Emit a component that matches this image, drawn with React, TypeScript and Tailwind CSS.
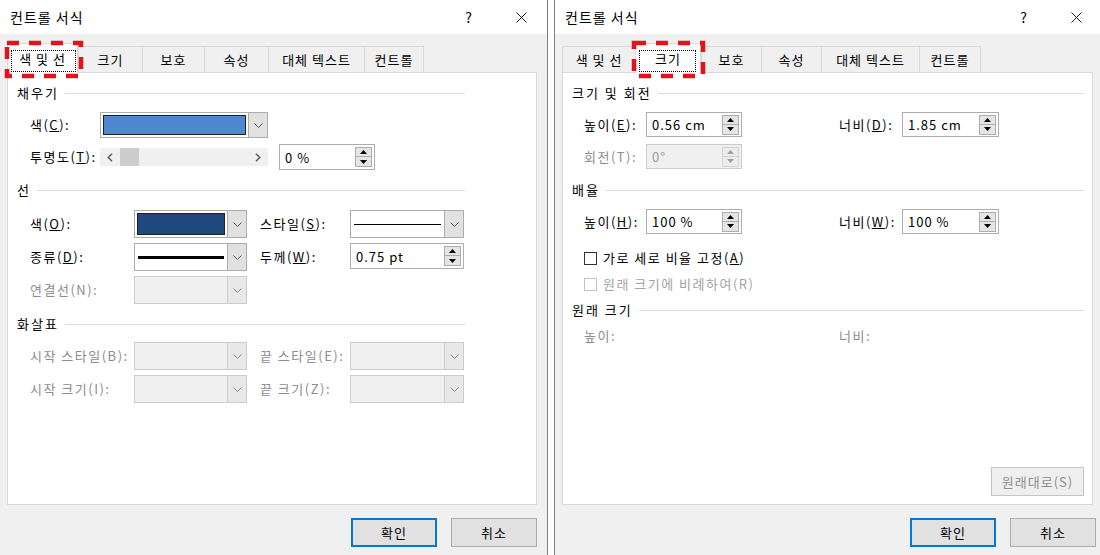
import React from "react";

type Kids = { children?: React.ReactNode; className?: string };

function Chevron({ dim }: { dim?: boolean }) {
  return (
    <svg width="9" height="5" viewBox="0 0 9 5">
      <path d="M0.5 0.5L4.5 4.5L8.5 0.5" fill="none" stroke={dim ? "#8a8a8a" : "#555555"} strokeWidth="1" />
    </svg>
  );
}

function Tri({ down, dim }: { down?: boolean; dim?: boolean }) {
  return (
    <svg width="7" height="4" viewBox="0 0 7 4">
      <path d={down ? "M0 0H7L3.5 4Z" : "M3.5 0L7 4H0Z"} fill={dim ? "#a0a0a0" : "#000000"} />
    </svg>
  );
}

function Dropdown({ children, className, disabled }: Kids & { disabled?: boolean }) {
  return (
    <div
      className={`flex items-stretch border ${
        disabled ? "border-[#cccccc] bg-[#f0f0f0]" : "border-[#adadad] bg-white"
      } ${className ?? ""}`}
    >
      <div className="flex-1 flex items-stretch p-[2px]">{children}</div>
      <div
        className={`w-[19px] flex items-center justify-center border-l ${
          disabled ? "border-[#cccccc] bg-[#e8e8e8]" : "border-[#adadad] bg-[#e1e1e1]"
        }`}
      >
        <Chevron dim={disabled} />
      </div>
    </div>
  );
}

function Swatch({ color }: { color: string }) {
  return <div className="flex-1 border border-[#202020]" style={{ backgroundColor: color }} />;
}

function LineSample({ thick }: { thick?: boolean }) {
  return (
    <div className="flex-1 flex items-center pl-[1px] pr-[1px]">
      <div className={`w-full bg-black ${thick ? "h-[3px]" : "h-px"}`} />
    </div>
  );
}

function Spinner({ value, className, disabled }: { value: string; className?: string; disabled?: boolean }) {
  return (
    <div
      className={`flex items-center border ${
        disabled ? "border-[#cccccc] bg-[#f0f0f0] text-[#9a9a9a]" : "border-[#adadad] bg-white"
      } ${className ?? ""}`}
    >
      <span className="flex-1 pl-[5px] leading-none tracking-[1px]">{value}</span>
      <div className="flex flex-col w-[17px] mr-[2px]">
        <div
          className={`h-[10px] flex items-center justify-center border ${
            disabled ? "border-[#d4d4d4] bg-[#ececec]" : "border-[#adadad] bg-[#e5e5e5]"
          }`}
        >
          <Tri dim={disabled} />
        </div>
        <div
          className={`h-[10px] flex items-center justify-center border border-t-0 ${
            disabled ? "border-[#d4d4d4] bg-[#ececec]" : "border-[#adadad] bg-[#e5e5e5]"
          }`}
        >
          <Tri down dim={disabled} />
        </div>
      </div>
    </div>
  );
}

function Scrollbar() {
  return (
    <div className="w-[168px] h-[18px] bg-[#f0f0f0] flex items-center">
      <div className="w-[20px] flex justify-center">
        <svg width="6" height="9" viewBox="0 0 6 9">
          <path d="M5 0.8L1.3 4.5L5 8.2" fill="none" stroke="#606060" strokeWidth="1.6" />
        </svg>
      </div>
      <div className="w-[19px] h-full bg-[#cdcdcd]" />
      <div className="flex-1" />
      <div className="w-[20px] flex justify-center">
        <svg width="6" height="9" viewBox="0 0 6 9">
          <path d="M1 0.8L4.7 4.5L1 8.2" fill="none" stroke="#606060" strokeWidth="1.6" />
        </svg>
      </div>
    </div>
  );
}

function GroupHeader({ title, className }: { title: string; className?: string }) {
  return (
    <div className={`flex items-center h-[18px] pl-[9px] gap-[6px] ${className ?? ""}`}>
      <span className="tracking-[2px]">{title}</span>
      <div className="flex-1 h-px bg-[#dcdcdc]" />
    </div>
  );
}

function Check({ disabled }: { disabled?: boolean }) {
  return (
    <div className={`w-[13px] h-[13px] border bg-white ${disabled ? "border-[#c4c4c4]" : "border-[#333333]"}`} />
  );
}

type TabDef = { label: string; w: string };

function Tabs({ tabs, selected, focusClass }: { tabs: TabDef[]; selected: number; focusClass: string }) {
  return (
    <div className="mt-[9px] h-[29px] flex items-end relative z-10">
      {tabs.map((t, i) =>
        i === selected ? (
          <div
            key={t.label}
            className={`${t.w} h-[30px] -mb-px relative bg-white border-l border-r border-t border-[#d9d9d9] flex items-center justify-center pt-[1px]`}
          >
            <span className="tracking-[1px]">{t.label}</span>
            <div className={`absolute border border-dotted border-black ${focusClass}`} />
          </div>
        ) : (
          <div
            key={t.label}
            className={`${t.w} h-[26px] bg-[#f0f0f0] border-t border-l border-[#d9d9d9] ${
              i === tabs.length - 1 ? "border-r" : ""
            } flex items-center justify-center`}
          >
            <span className="tracking-[1px]">{t.label}</span>
          </div>
        )
      )}
    </div>
  );
}

function RedMark({ className }: { className: string }) {
  return (
    <div className={`absolute pointer-events-none ${className}`}>
      <svg width="100%" height="100%" className="overflow-visible">
        <rect
          x="2"
          y="2"
          width="calc(100% - 4px)"
          height="calc(100% - 4px)"
          fill="none"
          stroke="#e3121b"
          strokeWidth="4.5"
          strokeDasharray="12 10"
        />
      </svg>
    </div>
  );
}

function TitleBar({ qClass, xClass }: { qClass: string; xClass: string }) {
  return (
    <div className="h-[34px] bg-white flex items-center pl-[10px] shrink-0">
      <span className="text-[14px] tracking-[1px]">컨트롤 서식</span>
      <span className={`ml-auto text-[14px] ${qClass}`}>?</span>
      <svg width="11" height="11" viewBox="0 0 11 11" className={xClass}>
        <path d="M0.5 0.5L10.5 10.5M10.5 0.5L0.5 10.5" stroke="#1a1a1a" strokeWidth="1" />
      </svg>
    </div>
  );
}

function Btn({ label, primary, disabled, className }: { label: string; primary?: boolean; disabled?: boolean; className?: string }) {
  return (
    <div
      className={`h-[29px] flex items-center justify-center tracking-[1px] ${
        primary
          ? "border-2 border-[#0078d7] bg-[#e1e1e1]"
          : disabled
          ? "border border-[#c4c4c4] bg-[#efefef] text-[#8d8d8d]"
          : "border border-[#adadad] bg-[#e1e1e1]"
      } ${className ?? ""}`}
    >
      {label}
    </div>
  );
}

const leftTabs: TabDef[] = [
  { label: "색 및 선", w: "w-[71px]" },
  { label: "크기", w: "w-[64px]" },
  { label: "보호", w: "w-[62px]" },
  { label: "속성", w: "w-[64px]" },
  { label: "대체 텍스트", w: "w-[96px]" },
  { label: "컨트롤", w: "w-[60px]" },
];

const rightTabs: TabDef[] = [
  { label: "색 및 선", w: "w-[73px]" },
  { label: "크기", w: "w-[66px]" },
  { label: "보호", w: "w-[60px]" },
  { label: "속성", w: "w-[60px]" },
  { label: "대체 텍스트", w: "w-[98px]" },
  { label: "컨트롤", w: "w-[62px]" },
];

function LinePanel() {
  return (
    <div className="h-[433px] border border-[#d9d9d9] bg-white flex flex-col tracking-[1.5px]">
      <GroupHeader title="채우기" className="mt-[11px] mr-[71px]" />
      <div className="mt-[10px] flex items-center h-[26px] pl-[22px]">
        <span className="w-[70px]">
          색(<u>C</u>):
        </span>
        <Dropdown className="w-[168px] h-[26px]">
          <Swatch color="#4f87d0" />
        </Dropdown>
      </div>
      <div className="mt-[6px] flex items-center h-[26px] pl-[22px]">
        <span className="w-[70px]">
          투명도(<u>T</u>):
        </span>
        <Scrollbar />
        <Spinner value="0 %" className="ml-[11px] w-[96px] h-[26px]" />
      </div>

      <GroupHeader title="선" className="mt-[11px] mr-[71px]" />
      <div className="mt-[11px] flex items-center h-[28px] pl-[22px]">
        <span className="w-[104px]">
          색(<u>O</u>):
        </span>
        <Dropdown className="w-[113px] h-[28px]">
          <Swatch color="#1f497d" />
        </Dropdown>
        <span className="ml-[13px] w-[90px]">
          스타일(<u>S</u>):
        </span>
        <Dropdown className="w-[114px] h-[28px]">
          <LineSample />
        </Dropdown>
      </div>
      <div className="mt-[5px] flex items-center h-[28px] pl-[22px]">
        <span className="w-[104px]">
          종류(<u>D</u>):
        </span>
        <Dropdown className="w-[113px] h-[28px]">
          <LineSample thick />
        </Dropdown>
        <span className="ml-[13px] w-[90px]">
          두께(<u>W</u>):
        </span>
        <Spinner value="0.75 pt" className="w-[114px] h-[26px] self-start" />
      </div>
      <div className="mt-[5px] flex items-center h-[28px] pl-[22px] text-[#8d8d8d]">
        <span className="w-[104px]">연결선(N):</span>
        <Dropdown className="w-[113px] h-[28px]" disabled />
      </div>

      <GroupHeader title="화살표" className="mt-[11px] mr-[71px]" />
      <div className="mt-[9px] flex items-center h-[28px] pl-[22px] text-[#8d8d8d]">
        <span className="w-[104px]">시작 스타일(B):</span>
        <Dropdown className="w-[113px] h-[28px]" disabled />
        <span className="ml-[13px] w-[90px]">끝 스타일(E):</span>
        <Dropdown className="w-[114px] h-[28px]" disabled />
      </div>
      <div className="mt-[5px] flex items-center h-[28px] pl-[22px] text-[#8d8d8d]">
        <span className="w-[104px]">시작 크기(I):</span>
        <Dropdown className="w-[113px] h-[28px]" disabled />
        <span className="ml-[13px] w-[90px]">끝 크기(Z):</span>
        <Dropdown className="w-[114px] h-[28px]" disabled />
      </div>
    </div>
  );
}

function SizePanel() {
  return (
    <div className="h-[433px] border border-[#d9d9d9] bg-white flex flex-col tracking-[1.5px]">
      <GroupHeader title="크기 및 회전" className="mt-[11px] mr-[7px]" />
      <div className="mt-[10px] flex items-center h-[25px] pl-[21px]">
        <span className="w-[62px]">
          높이(<u>E</u>):
        </span>
        <Spinner value="0.56 cm" className="w-[96px] h-[25px]" />
        <span className="ml-[97px] w-[63px]">
          너비(<u>D</u>):
        </span>
        <Spinner value="1.85 cm" className="w-[97px] h-[25px]" />
      </div>
      <div className="mt-[7px] flex items-center h-[25px] pl-[21px]">
        <span className="w-[62px] text-[#8d8d8d]">회전(T):</span>
        <Spinner value="0°" className="w-[96px] h-[25px]" disabled />
      </div>

      <GroupHeader title="배율" className="mt-[12px] mr-[7px]" />
      <div className="mt-[10px] flex items-center h-[25px] pl-[21px]">
        <span className="w-[62px]">
          높이(<u>H</u>):
        </span>
        <Spinner value="100 %" className="w-[96px] h-[25px]" />
        <span className="ml-[97px] w-[63px]">
          너비(<u>W</u>):
        </span>
        <Spinner value="100 %" className="w-[97px] h-[25px]" />
      </div>
      <div className="mt-[15px] flex items-center h-[18px] pl-[21px] gap-[6px]">
        <Check />
        <span>
          가로 세로 비율 고정(<u>A</u>)
        </span>
      </div>
      <div className="mt-[8px] flex items-center h-[18px] pl-[21px] gap-[6px] text-[#a3a3a3]">
        <Check disabled />
        <span>원래 크기에 비례하여(R)</span>
      </div>

      <GroupHeader title="원래 크기" className="mt-[8px] mr-[7px]" />
      <div className="mt-[8px] flex items-center h-[18px] pl-[21px] text-[#8d8d8d]">
        <span className="w-[255px]">높이:</span>
        <span>너비:</span>
      </div>

      <div className="flex-1" />
      <div className="flex justify-end mr-[8px] mb-[8px]">
        <Btn label="원래대로(S)" disabled className="w-[93px] tracking-[0.5px]" />
      </div>
    </div>
  );
}

export default function App() {
  return (
    <div className="flex w-[1100px] h-[555px] overflow-hidden bg-white text-[13px] text-black font-['Noto_Sans_CJK_KR','Noto_Sans',sans-serif]">
      {/* left dialog: 색 및 선 */}
      <div className="w-[548px] shrink-0 flex flex-col border-r border-[#7f7f7f]">
        <TitleBar qClass="mr-[44px]" xClass="mr-[20px]" />
        <div className="flex-1 bg-[#f0f0f0] flex flex-col pl-[7px] pr-[10px] relative">
          <Tabs tabs={leftTabs} selected={0} focusClass="left-[3px] top-[6px] w-[65px] h-[22px]" />
          <RedMark className="left-[5px] top-[7px] w-[78px] h-[37px] z-20" />
          <LinePanel />
          <div className="mt-[13px] flex justify-end gap-[14px]">
            <Btn label="확인" primary className="w-[86px]" />
            <Btn label="취소" className="w-[86px]" />
          </div>
        </div>
      </div>

      <div className="w-[6px] shrink-0 bg-white" />

      {/* right dialog: 크기 */}
      <div className="w-[546px] shrink-0 flex flex-col border-l border-[#7f7f7f]">
        <TitleBar qClass="mr-[44px]" xClass="mr-[18px]" />
        <div className="flex-1 bg-[#f0f0f0] flex flex-col pl-[7px] pr-[7px] relative">
          <Tabs tabs={rightTabs} selected={1} focusClass="left-[3px] top-[6px] w-[57px] h-[22px]" />
          <RedMark className="left-[77px] top-[7px] w-[73px] h-[37px] z-20" />
          <SizePanel />
          <div className="mt-[13px] -mr-[3px] flex justify-end gap-[14px]">
            <Btn label="확인" primary className="w-[86px]" />
            <Btn label="취소" className="w-[86px]" />
          </div>
        </div>
      </div>
    </div>
  );
}
